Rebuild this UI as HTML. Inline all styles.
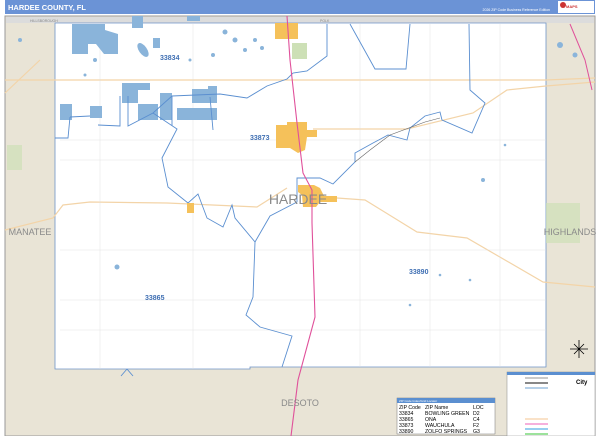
<!DOCTYPE html>
<html><head><meta charset="utf-8"><style>
body{margin:0;width:600px;height:436px;overflow:hidden;background:#fff;font-family:"Liberation Sans",sans-serif}
svg{display:block}
</style></head><body>
<svg width="600" height="436" viewBox="0 0 600 436" xmlns="http://www.w3.org/2000/svg" font-family="Liberation Sans, sans-serif">
<rect width="600" height="436" fill="#fff"/>
<rect x="5" y="0" width="590" height="14" fill="#6b93d6"/>
<text x="8" y="10" font-size="7.5" font-weight="bold" fill="#fff">HARDEE COUNTY, FL</text>
<text x="550" y="11" font-size="3.5" fill="#fff" text-anchor="end">2026 ZIP Code Business Reference Edition</text>
<rect x="558" y="1" width="36" height="12" fill="#fff"/>
<circle cx="563" cy="5" r="3" fill="#c33"/>
<text x="566" y="8" font-size="4" fill="#c33" font-weight="bold">MAPS</text>
<rect x="5" y="16" width="590" height="420" fill="#e9e4d6"/>
<rect x="5" y="16" width="590" height="420" fill="none" stroke="#999" stroke-width="1"/>
<rect x="6" y="17" width="588" height="6" fill="#dcdcdc"/>
<text x="30" y="22" font-size="3.5" fill="#888">HILLSBOROUGH</text>
<text x="320" y="22" font-size="3.5" fill="#888">POLK</text>
<path d="M55 23 L546 23 L546 367 L250 367 L250 369 L55 369 Z" fill="#fff" stroke="#6f93c7" stroke-width="0.8"/>
<!-- roads tan -->
<g fill="none" stroke="#f3d4a8" stroke-width="1.2">
<path d="M5 80 L546 80 L595 78"/>
<path d="M5 230 L53 218 L63 205 L90 202 L167 203 L257 207 L287 188"/>
<path d="M337 198 L365 200 L417 232 L467 238 L543 282 L595 287"/>
<path d="M313 129 L407 129 L473 113 L507 90 L546 86 L595 82"/>
<path d="M5 93 L40 60"/>
</g>
<!-- grid roads faint -->
<g stroke="#ddd" stroke-width="0.4" fill="none">
<path d="M60 300 L546 300 M60 330 L546 330 M60 160 L546 160 M60 250 L546 250 M60 140 L546 140"/>
<path d="M100 24 L100 369 M193 24 L193 369 M360 24 L360 367 M430 24 L430 367 M500 24 L500 367"/>
</g>
<!-- lakes -->
<g fill="#8ab4da">
<path d="M72 24 L105 24 L105 30 L118 34 L118 54 L104 54 L96 44 L88 44 L88 54 L72 54 Z"/>
<rect x="153" y="38" width="7" height="10"/>
<ellipse cx="143" cy="50" rx="4" ry="8" transform="rotate(-35 143 50)"/>
<rect x="132" y="16" width="11" height="12"/>
<rect x="187" y="16" width="13" height="5"/>
<path d="M122 83 L150 83 L150 90 L138 90 L138 103 L122 103 Z"/>
<rect x="160" y="93" width="12" height="27"/>
<path d="M192 89 L208 89 L208 86 L217 86 L217 103 L192 103 Z"/>
<rect x="177" y="108" width="40" height="12"/>
<rect x="138" y="104" width="20" height="16"/>
<rect x="90" y="106" width="12" height="12"/>
<rect x="60" y="104" width="12" height="16"/>
<circle cx="225" cy="32" r="2.5"/><circle cx="235" cy="40" r="2.5"/><circle cx="245" cy="50" r="2"/>
<circle cx="213" cy="55" r="2"/><circle cx="262" cy="48" r="2"/><circle cx="255" cy="40" r="2"/>
<circle cx="190" cy="60" r="1.5"/><circle cx="95" cy="60" r="2"/><circle cx="85" cy="75" r="1.5"/>
<circle cx="560" cy="45" r="3"/><circle cx="575" cy="55" r="2.5"/><circle cx="20" cy="40" r="2"/>
<circle cx="117" cy="267" r="2.5"/><circle cx="483" cy="180" r="2"/><circle cx="440" cy="275" r="1.3"/>
<circle cx="410" cy="305" r="1.3"/><circle cx="470" cy="280" r="1.3"/><circle cx="505" cy="145" r="1.3"/>
</g>
<rect x="292" y="43" width="15" height="16" fill="#cde0b6"/>
<rect x="7" y="145" width="15" height="25" fill="#cde0b6" opacity=".7"/>
<rect x="546" y="203" width="34" height="40" fill="#cde0b6" opacity=".7"/>
<!-- zip boundaries -->
<g fill="none" stroke="#5b8fd0" stroke-width="0.9">
<path d="M327 24 L327 56 L307 71 L293 73 L287 79 L267 86 L247 98 L220 94 L172 96 L153 113 L128 126 L128 96"/>
<path d="M120 96 L120 126 L98 125"/>
<path d="M153 113 L177 129 L162 158 L168 187 L188 203 L198 194 L207 218 L223 227 L232 205 L235 218 L255 242 L253 297 L246 315 L260 327 L292 336 L282 367"/>
<path d="M172 96 L172 126"/>
<path d="M213 130 L210 97"/>
<path d="M70 117 L90 116 M70 117 L68 138 L55 138"/>
<path d="M255 242 L270 216 L297 202 L297 178 L320 178 L333 184 L355 162 L355 153 L373 143 L388 135 L407 140 L410 128 L425 116 L440 112 L442 120 L472 133 L485 103 L470 90 L469 24"/>
<path d="M350 24 L375 69 L406 69 L410 24"/>
<path d="M127 369 L133 376 M127 369 L121 376"/>
</g>
<path d="M355 162 L370 150 L390 135 L425 122 L440 118" fill="none" stroke="#666" stroke-width="0.6"/>
<!-- towns -->
<g fill="#f5c15a">
<rect x="275" y="23" width="23" height="16"/>
<path d="M276 125 L287 125 L287 122 L307 122 L307 130 L317 130 L317 137 L307 137 L305 150 L298 153 L290 148 L276 148 Z"/>
<path d="M298 185 L314 185 L320 188 L324 196 L337 196 L337 202 L320 202 L316 207 L303 207 L302 195 L298 192 Z"/>
<rect x="187" y="203" width="7" height="10"/>
</g>
<!-- highway -->
<path d="M287 16 L290 60 L297 123 L303 173 L312 190 L312 223 L315 317 L298 380 L291 436" fill="none" stroke="#e0509a" stroke-width="1.1"/>
<path d="M570 24 L585 60 L592 90" fill="none" stroke="#e0509a" stroke-width="1"/>
<!-- labels -->
<g font-weight="bold" fill="#3f6fb3" font-size="7">
<text x="160" y="60">33834</text>
<text x="250" y="140">33873</text>
<text x="409" y="274">33890</text>
<text x="145" y="300">33865</text>
</g>
<text x="298" y="204" font-size="14" fill="#8a8a8a" text-anchor="middle">HARDEE</text>
<text x="30" y="235" font-size="9" fill="#8a8a8a" text-anchor="middle">MANATEE</text>
<text x="570" y="235" font-size="9" fill="#8a8a8a" text-anchor="middle">HIGHLANDS</text>
<text x="300" y="406" font-size="9" fill="#8a8a8a" text-anchor="middle">DESOTO</text>
<!-- compass -->
<g stroke="#000" stroke-width="0.8" transform="translate(579,349)">
<path d="M0 -9 L0 9 M-9 0 L9 0 M-5 -5 L5 5 M-5 5 L5 -5"/>
</g>
<!-- zip index -->
<rect x="397" y="398" width="98" height="36" fill="#fff" stroke="#777" stroke-width="0.5"/>
<rect x="397" y="398" width="98" height="5" fill="#5b8fd0"/>
<text x="399" y="402" font-size="3" fill="#fff">ZIP Code Index/Grid Locator</text>
<g font-size="5.2" fill="#000">
<text x="399" y="409">ZIP Code</text><text x="425" y="409">ZIP Name</text><text x="473" y="409">LOC</text>
<text x="399" y="415">33834</text><text x="425" y="415">BOWLING GREEN</text><text x="473" y="415">D2</text>
<text x="399" y="421">33865</text><text x="425" y="421">ONA</text><text x="473" y="421">C4</text>
<text x="399" y="427">33873</text><text x="425" y="427">WAUCHULA</text><text x="473" y="427">F2</text>
<text x="399" y="433">33890</text><text x="425" y="433">ZOLFO SPRINGS</text><text x="473" y="433">G3</text>
</g>
<!-- legend -->
<rect x="507" y="372" width="88" height="64" fill="#fff" stroke="#888" stroke-width="0.5"/>
<rect x="507" y="372" width="88" height="3" fill="#5b8fd0"/>
<g stroke-width="1.2">
<line x1="525" y1="378" x2="548" y2="378" stroke="#aaa"/>
<line x1="525" y1="383" x2="548" y2="383" stroke="#888" stroke-width="2"/>
<line x1="525" y1="388" x2="548" y2="388" stroke="#8ab4da"/>
<line x1="525" y1="419" x2="548" y2="419" stroke="#f8d0a8"/>
<line x1="525" y1="424" x2="548" y2="424" stroke="#f080c8"/>
<line x1="525" y1="429" x2="548" y2="429" stroke="#5ab0e8"/>
<line x1="525" y1="434" x2="548" y2="434" stroke="#60d060"/>
</g>
<text x="576" y="384" font-size="6" font-weight="bold">City</text>
</svg>
</body></html>
